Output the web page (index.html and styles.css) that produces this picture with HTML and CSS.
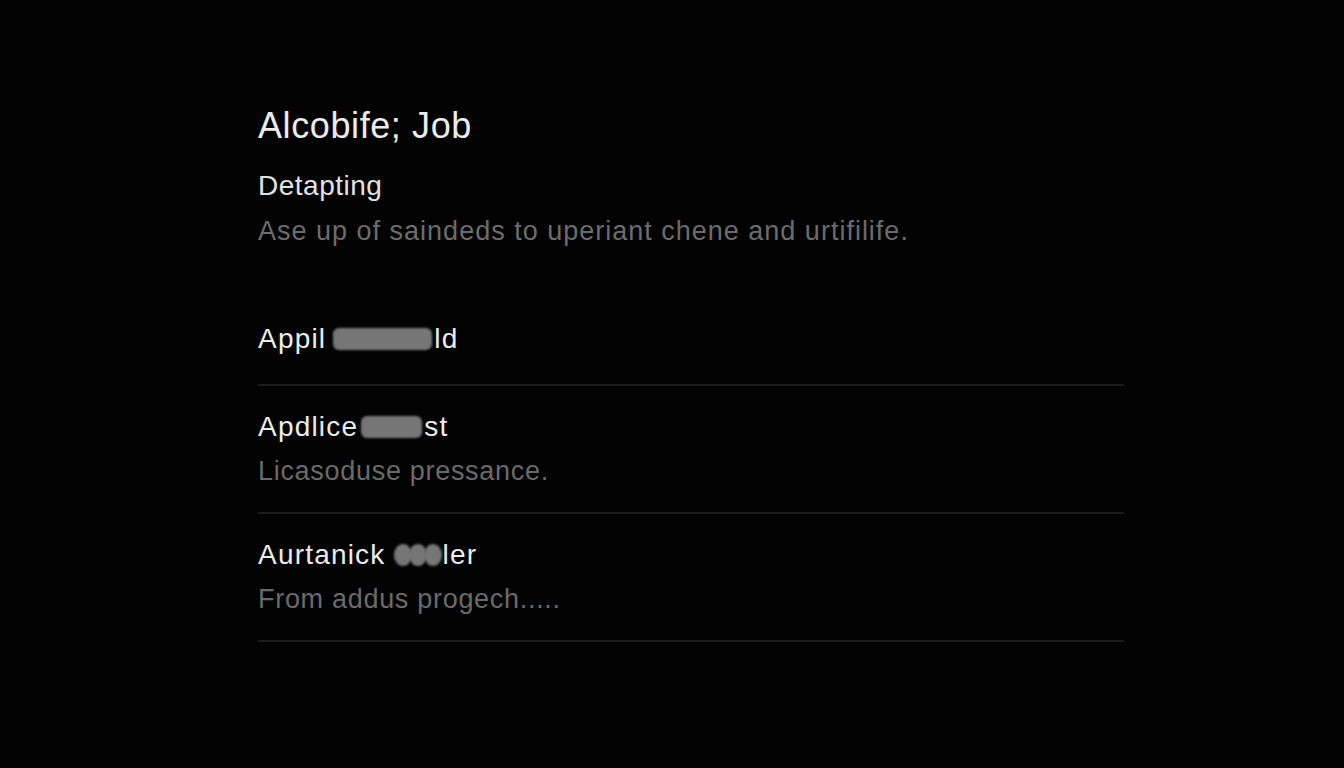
FILE: index.html
```html
<!DOCTYPE html>
<html lang="en">
<head>
<meta charset="utf-8">
<title>Alcobife; Job</title>
<link rel="stylesheet" href="styles.css">
</head>
<body>
<main class="panel">
  <header class="head">
    <h1 class="title">Alcobife; Job</h1>
    <h2 class="subtitle">Detapting</h2>
    <p class="desc">Ase up of saindeds to uperiant chene and urtifilife.</p>
  </header>
  <ul class="list">
    <li class="row row-single">
      <div class="row-title">Appil <span class="blur blur-a"></span>ld</div>
    </li>
    <li class="row">
      <div class="row-title">Apdlice<span class="blur blur-b"></span>st</div>
      <div class="row-sub">Licasoduse pressance.</div>
    </li>
    <li class="row">
      <div class="row-title">Aurtanick <span class="dots"><span class="dot"></span><span class="dot"></span><span class="dot"></span></span>ler</div>
      <div class="row-sub">From addus progech.....</div>
    </li>
  </ul>
</main>
</body>
</html>
```

FILE: styles.css
```css
html, body {
  margin: 0;
  padding: 0;
  background: #030303;
  height: 100%;
}

body {
  font-family: "Liberation Sans", Arial, sans-serif;
  color: #e6e6e6;
}

.panel {
  width: 866px;
  margin-left: 258px;
  padding-top: 104px;
}

.head {
  display: flex;
  flex-direction: column;
}

.title {
  margin: 0;
  font-size: 36px;
  line-height: 44px;
  font-weight: 400;
  letter-spacing: 0.6px;
  color: #ececec;
}

.subtitle {
  margin: 20px 0 0;
  font-size: 28px;
  line-height: 36px;
  font-weight: 400;
  letter-spacing: 0.5px;
  color: #e2e2e2;
}

.desc {
  margin: 9px 0 0;
  font-size: 27px;
  line-height: 36px;
  letter-spacing: 1px;
  color: #6c6c6c;
}

.list {
  list-style: none;
  margin: 48px 0 0;
  padding: 0;
}

.row {
  display: flex;
  flex-direction: column;
  gap: 8px;
  padding: 23px 0 23px;
  border-bottom: 2px solid #1b1b1b;
}

.row-single {
  padding-top: 24px;
  padding-bottom: 27px;
}

.row-title {
  font-size: 28px;
  line-height: 36px;
  letter-spacing: 1.2px;
  color: #ececec;
  white-space: nowrap;
}

.row-sub {
  font-size: 27px;
  line-height: 36px;
  letter-spacing: 0.7px;
  color: #6a6a6a;
}

.blur {
  display: inline-block;
  vertical-align: middle;
  height: 22px;
  background: #767676;
  border-radius: 6px;
  filter: blur(1.2px);
  margin-top: -4px;
  margin-right: 2px;
}

.blur-a {
  width: 99px;
  margin-left: -2px;
}

.blur-b {
  width: 61px;
  margin-left: 3px;
}

.dots {
  display: inline-flex;
  vertical-align: middle;
  margin-top: -4px;
  margin-left: -1px;
  margin-right: 1px;
}

.dot {
  width: 18px;
  height: 22px;
  border-radius: 50%;
  background: #767676;
  filter: blur(1px);
  margin-right: -3px;
}

.dot:last-child {
  margin-right: 0;
}
```
